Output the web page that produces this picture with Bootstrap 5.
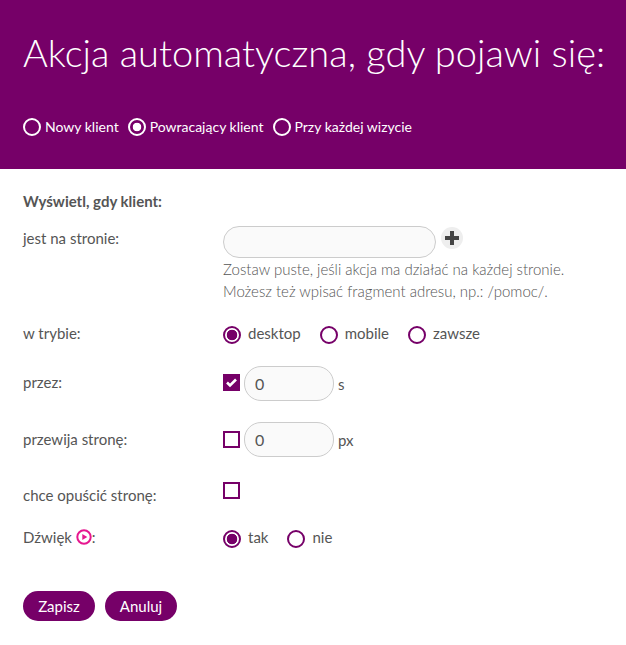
<!DOCTYPE html>
<html lang="pl"><head><meta charset="utf-8">
<link rel="stylesheet" href="https://cdn.jsdelivr.net/npm/bootstrap@5.3.0/dist/css/bootstrap.min.css">
<style>
body{font-family:Lato,sans-serif;font-size:15px;color:#555;background:#fff;line-height:22px}
.hero{background:#760068;color:#fff;height:169px;padding:29px 23px 0}
.hero h1{font-weight:300;font-size:38px;line-height:46px;margin:0 0 41px;white-space:nowrap;color:#fff}
.hero-opts{gap:9px;height:22px;font-size:14px}
.opt{display:flex;align-items:center;margin:0}
.rd{appearance:none;width:18px;height:18px;border-radius:50%;border:2px solid #760068;background:#fff;margin:3px 0 0;flex:none}
.rd:checked{background:radial-gradient(circle,#760068 0 5px,#fff 5.6px)}
.hero .rd{background:transparent;border-color:#fff;margin:0 4px 0 0}
.hero .rd:checked{background:radial-gradient(circle,#fff 0 4px,transparent 4.6px)}
.cb{appearance:none;width:17px;height:17px;border:2px solid #760068;background:#fff;margin:0;flex:none;display:block}
.cb:checked{background:#760068 url("data:image/svg+xml,%3Csvg xmlns='http://www.w3.org/2000/svg' viewBox='0 0 17 17'%3E%3Cpath d='M4 8.5l3 3 6-6' fill='none' stroke='%23fff' stroke-width='2.6'/%3E%3C/svg%3E") center/17px no-repeat;border:0}
.frm{padding:21px 23px 0}
.lab{width:200px;flex:none}
.tf{border:1px solid #ccc;background:#fafafa;border-radius:17px;color:#555;font:15px Lato,sans-serif;outline:0}
.tf-url{width:213px;height:32px;padding:0 14px}
.tf-num{width:90px;height:35px;padding:0 10px;margin:0 4px;font-size:16px}
.plus{width:22px;height:22px;border-radius:50%;background:#eee;margin:1px 0 0 5px;display:flex;align-items:center;justify-content:center;padding:0;border:0}
.hint{font-weight:300;color:#555;margin:0;line-height:22px}
.rline{display:flex;align-items:center;gap:7px;margin:0 19px 0 0}
.r-title{font-weight:700;height:22px;margin-bottom:14px}
.lab-top{line-height:22px;padding-top:1px}
.playi{vertical-align:-2px}
.act{background:#760068;color:#fff;border:0;border-radius:15px;width:72px;height:30px;padding:0;font-size:15px;line-height:28px}
.act:hover{background:#760068;color:#fff}
.row-mode{margin-top:20px;height:22px}
.row-a{margin-top:22px;height:35px}
.row-a .lab{padding-bottom:4px}
.row-b .lab{padding-bottom:2px}
.row-a .cb{margin-top:-3px}
.row-b .cb{margin-top:-1px}
.row-b{margin-top:21px;height:35px}
.row-c{margin-top:26px;height:22px}
.row-c .cb{margin-top:-7px}
.row-c .lab{padding-top:2px}
.row-d{margin-top:21px;height:22px}
.btn-row{margin-top:43px;gap:10px}
</style></head><body>
<div class="hero">
<h1>Akcja automatyczna, gdy pojawi się:</h1>
<div class="d-flex hero-opts">
<label class="opt"><input class="rd" type="radio" name="k">Nowy klient</label>
<label class="opt"><input class="rd" type="radio" name="k" checked>Powracający klient</label>
<label class="opt"><input class="rd" type="radio" name="k">Przy każdej wizycie</label>
</div></div>
<form class="frm">
<div class="r-title">Wyświetl, gdy klient:</div>
<div class="d-flex"><div class="lab lab-top">jest na stronie:</div>
<div><div class="d-flex align-items-start"><input class="tf tf-url" type="text">
<button class="plus" type="button"><svg width="16" height="16" viewBox="0 0 16 16"><path d="M8 1v14M1 8h14" stroke="#444" stroke-width="4"/></svg></button></div>
<p class="hint">Zostaw puste, jeśli akcja ma działać na każdej stronie.<br>Możesz też wpisać fragment adresu, np.: /pomoc/.</p></div></div>
<div class="d-flex align-items-center row-mode"><div class="lab">w trybie:</div>
<label class="rline"><input class="rd" type="radio" name="t" checked>desktop</label>
<label class="rline"><input class="rd" type="radio" name="t">mobile</label>
<label class="rline"><input class="rd" type="radio" name="t">zawsze</label></div>
<div class="d-flex align-items-center row-a"><div class="lab">przez:</div><input class="cb" type="checkbox" checked><input class="tf tf-num" value="0">s</div>
<div class="d-flex align-items-center row-b"><div class="lab">przewija stronę:</div><input class="cb" type="checkbox"><input class="tf tf-num" value="0">px</div>
<div class="d-flex align-items-center row-c"><div class="lab">chce opuścić stronę:</div><input class="cb" type="checkbox"></div>
<div class="d-flex align-items-center row-d"><div class="lab">Dźwięk <svg class="playi" width="16" height="16" viewBox="0 0 16 16"><circle cx="8" cy="8" r="6.7" fill="none" stroke="#e6178f" stroke-width="2"/><path d="M6.3 5l5 3-5 3z" fill="#e6178f"/></svg>:</div>
<label class="rline"><input class="rd" type="radio" name="d" checked>tak</label>
<label class="rline"><input class="rd" type="radio" name="d">nie</label></div>
<div class="d-flex btn-row"><button class="btn act" type="button">Zapisz</button><button class="btn act" type="button">Anuluj</button></div>
</form>
</body></html>
